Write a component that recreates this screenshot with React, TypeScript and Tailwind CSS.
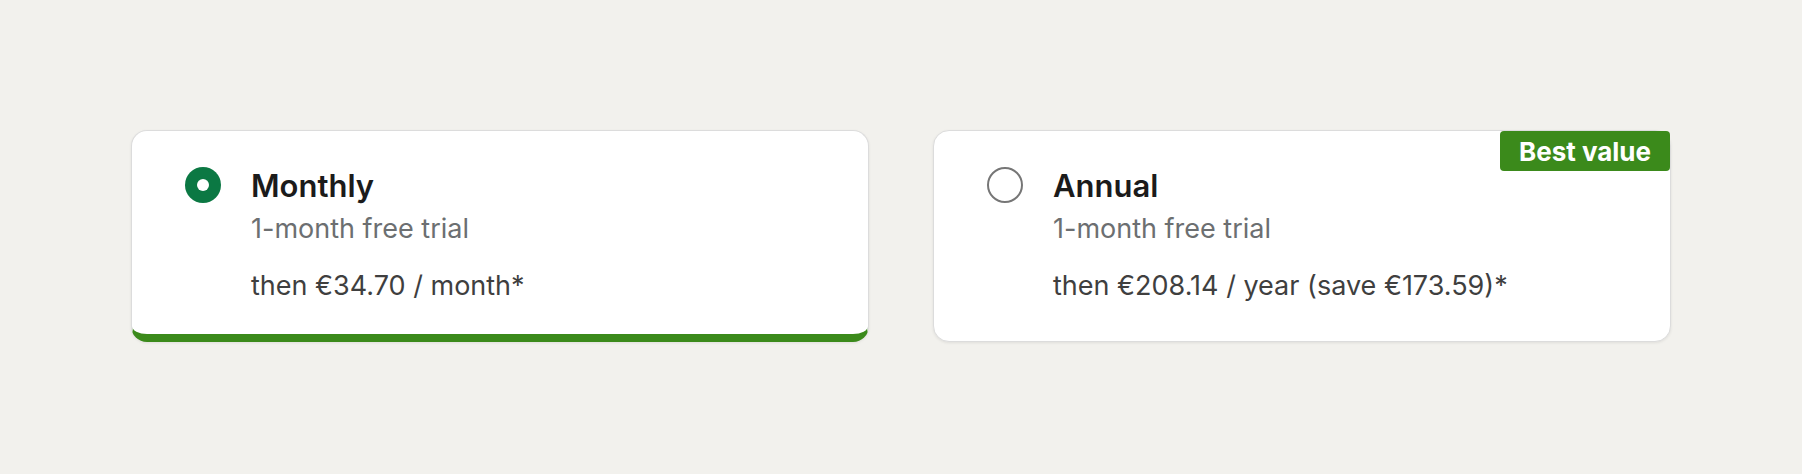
import { useState } from "react";

interface PlanProps {
  title: string;
  trial: string;
  price: string;
  selected: boolean;
  badge?: string;
  onSelect: () => void;
}

function Radio({ checked }: { checked: boolean }) {
  if (checked) {
    return (
      <div className="mt-[1px] flex h-9 w-9 shrink-0 items-center justify-center rounded-full bg-[#0b7843]">
        <div className="h-3 w-3 rounded-full bg-white" />
      </div>
    );
  }
  return <div className="mt-[1px] h-9 w-9 shrink-0 rounded-full border-2 border-[#767676]" />;
}

function PlanCard({ title, trial, price, selected, badge, onSelect }: PlanProps) {
  return (
    <button
      type="button"
      onClick={onSelect}
      className={
        selected
          ? "relative flex w-[738px] items-start gap-[30px] rounded-2xl border border-b-8 border-[#dcdcdc] border-b-[#3b8a1b] bg-white pt-[35px] pb-[30px] pl-[53px] pr-8 text-left shadow-[0_1px_3px_rgba(0,0,0,0.08)]"
          : "relative flex w-[738px] items-start gap-[30px] rounded-2xl border border-[#dcdcdc] bg-white pt-[35px] pb-[30px] pl-[53px] pr-8 text-left shadow-[0_1px_3px_rgba(0,0,0,0.08)]"
      }
    >
      {badge && (
        <span className="absolute top-0 right-0 flex h-10 w-[170px] items-center justify-center rounded-[4px] bg-[#3b8a1b] text-[26px] font-bold text-white">
          {badge}
        </span>
      )}
      <Radio checked={selected} />
      <div className="flex flex-col">
        <span className="text-[31px] leading-[40px] font-semibold text-[#1b1b1b]">{title}</span>
        <span className="mt-[5px] text-[27px] leading-[36px] text-[#6c6f71]">{trial}</span>
        <span className="mt-[21px] text-[27px] leading-[36px] text-[#3f3f3f]">{price}</span>
      </div>
    </button>
  );
}

export default function App() {
  const [plan, setPlan] = useState("monthly");

  return (
    <div
      className="flex h-[474px] w-full justify-center bg-[#f2f1ed] pt-[130px]"
      style={{ fontFamily: "Inter, 'Noto Sans', 'Liberation Sans', sans-serif" }}
    >
      <div className="flex items-stretch gap-16 self-start">
        <PlanCard
          title="Monthly"
          trial="1-month free trial"
          price="then €34.70 / month*"
          selected={plan === "monthly"}
          onSelect={() => setPlan("monthly")}
        />
        <PlanCard
          title="Annual"
          trial="1-month free trial"
          price="then €208.14 / year (save €173.59)*"
          badge="Best value"
          selected={plan === "annual"}
          onSelect={() => setPlan("annual")}
        />
      </div>
    </div>
  );
}
